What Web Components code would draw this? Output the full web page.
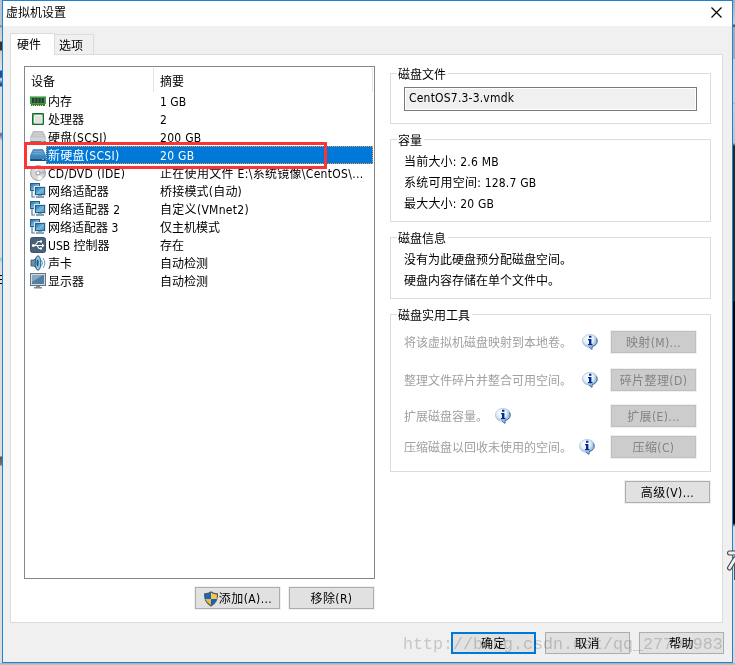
<!DOCTYPE html>
<html lang="zh-CN">
<head>
<meta charset="utf-8">
<title>虚拟机设置</title>
<style>
html,body{margin:0;height:100%;overflow:hidden}
body{font:12px/18px "DejaVu Sans Condensed","Noto Sans CJK SC",sans-serif;color:#000}
</style>
</head>
<body>
<desktop-backdrop>
<vm-dialog heading="虚拟机设置">
  <tab-panel>
    <tab-label slot="tabs" active>硬件</tab-label>
    <tab-label slot="tabs">选项</tab-label>
    <device-pane slot="left">
      <device-row icon="memory" name="内存">1 GB</device-row>
      <device-row icon="cpu" name="处理器">2</device-row>
      <device-row icon="disk" name="硬盘(SCSI)" style="--ls:.28px">200 GB</device-row>
      <device-row icon="diskblue" name="新硬盘(SCSI)" selected style="--ls:.28px">20 GB</device-row>
      <device-row icon="cd" name="CD/DVD (IDE)" style="--ls:.31px">正在使用文件 E:\系统镜像\CentOS\...</device-row>
      <device-row icon="net" name="网络适配器" style="--ls:.2px">桥接模式(自动)</device-row>
      <device-row icon="net" name="网络适配器 2" style="--ls:.3px">自定义(VMnet2)</device-row>
      <device-row icon="net" name="网络适配器 3">仅主机模式</device-row>
      <device-row icon="usb" name="USB 控制器">存在</device-row>
      <device-row icon="sound" name="声卡">自动检测</device-row>
      <device-row icon="screen" name="显示器">自动检测</device-row>
      <dialog-button slot="actions"><vm-icon name="shield"></vm-icon>添加(A)...</dialog-button>
      <dialog-button slot="actions">移除(R)</dialog-button>
    </device-pane>
    <detail-pane slot="right">
      <group-box heading="磁盘文件" style="height:51px;--pad:14px 13px 0"><path-field>CentOS7.3-3.vmdk</path-field></group-box>
      <group-box heading="容量" style="height:83px;--pad:12px 13px 0">
        <text-line>当前大小: 2.6 MB</text-line><text-line>系统可用空间: 128.7 GB</text-line><text-line>最大大小: 20 GB</text-line>
      </group-box>
      <group-box heading="磁盘信息" style="height:62px;--pad:12px 13px 0">
        <text-line style="letter-spacing:0">没有为此硬盘预分配磁盘空间。</text-line><text-line style="letter-spacing:0">硬盘内容存储在单个文件中。</text-line>
      </group-box>
      <group-box heading="磁盘实用工具" style="height:158px;--pad:16px 14px 0 13px">
        <tool-row action="映射(M)..." style="margin-bottom:15px;--gap:10px">将该虚拟机磁盘映射到本地卷。</tool-row>
        <tool-row action="碎片整理(D)" style="margin-bottom:13px;--gap:10px">整理文件碎片并整合可用空间。</tool-row>
        <tool-row action="扩展(E)..." style="margin-bottom:8px;--gap:7px">扩展磁盘容量。</tool-row>
        <tool-row action="压缩(C)" style="--gap:7px">压缩磁盘以回收未使用的空间。</tool-row>
      </group-box>
      <dialog-button style="align-self:flex-end;margin:-6px 1px 0 0">高级(V)...</dialog-button>
    </detail-pane>
  </tab-panel>
  <dialog-button slot="footer" primary>确定</dialog-button>
  <dialog-button slot="footer">取消</dialog-button>
  <dialog-button slot="footer">帮助</dialog-button>
</vm-dialog>
</desktop-backdrop>

<script>
const define = (name, css, html) => customElements.define(name, class extends HTMLElement {
  constructor() { super(); this.attachShadow({mode: 'open'}); }
  connectedCallback() {
    this.shadowRoot.innerHTML = `<style>*{box-sizing:border-box}:host{box-sizing:border-box}${css}</style>` + (typeof html === 'function' ? html(this) : html);
  }
});

const screenShape = (x, y, w, h) => `<rect x="${x}" y="${y}" width="${w}" height="${h}" fill="#2b5f8b"/><rect x="${x+1}" y="${y+1}" width="${w-2}" height="${h-2}" fill="url(#s)"/>`;
const drive = (top, mid, low, edge) => `<path d="M3.200 2.500h9.600l2.900 6v5h-15.400v-5z" fill="${top}" stroke="${edge}" stroke-width=".5"/><path d="M.3 8.500h15.400v5H.3z" fill="${mid}"/><path d="M.3 12h15.400v2H.3z" fill="${low}"/><path d="M4 4.500h8M3.400 6.500h9.200" stroke="#fff" stroke-opacity=".25" stroke-width=".7"/>`;
const ICONS = {
  memory: `<path d="M0 3h16v8h-1v2H1v-2H0z" fill="#3f9a45"/><path d="M0 3h16v1H0z" fill="#86c988"/><path d="M2 5h2.400v5H2zM5.200 5h2.400v5H5.200zM8.400 5h2.400v5H8.400zM11.600 5H14v5h-2.400z" fill="#343a3c"/><path d="M1 11.500h14V13H1z" fill="#267430"/><path d="M2 12.500h12" stroke="#e7d97b" stroke-dasharray="1 1"/>`,
  cpu: `<path d="M2.500 2.500h11v11h-11z" fill="#5fb565" stroke="#16683a"/><rect x="4.500" y="4.500" width="7.500" height="7.500" rx=".8" fill="#e0e1e1" stroke="#f8faf8"/><path d="M4.500 12.300h7.800V4.500" fill="none" stroke="#aab9af" stroke-width=".7"/>`,
  disk: drive('#c3c6ca', '#d2d5d8', '#73777b', '#94999d') + `<path d="M11 12.800h3" stroke="#7bf064"/>`,
  diskblue: drive('#4f95c8', '#3c82bb', '#135481', '#205e8e') + `<path d="M12 12.500h2" stroke="#45bfcf"/>`,
  cd: `<circle cx="8" cy="8" r="7.400" fill="#d5d7da" stroke="#999fa4"/><path d="M8 8L3 2.500A7 7 0 0 1 9 1zM8 8l5 5.500A7 7 0 0 1 7.500 15z" fill="#f8f8f8"/><path d="M8 8l6.500-2.500A7 7 0 0 1 15 9z" fill="#b4b7bb"/><circle cx="8" cy="8" r="2.600" fill="#aaafb3"/><circle cx="8" cy="8" r="1.300" fill="#fff"/>`,
  net: `<defs><linearGradient id="s" x2="1" y2="1"><stop stop-color="#2675ad"/><stop offset=".55" stop-color="#75b9dd"/><stop offset="1" stop-color="#4b91c0"/></linearGradient></defs>${screenShape(0, 0, 10, 8)}<path d="M2 8v6h3" fill="none" stroke="#477ca4" stroke-width="1.200"/><rect x="4" y="3" width="12" height="10" fill="#d9e7f0"/>${screenShape(5, 4, 10, 8)}<path d="M8 12h4v1h2v2H6v-2h2z" fill="#88a3b6"/>`,
  usb: `<rect x=".5" y=".5" width="15" height="15" rx="2" fill="#486179" stroke="#39536c"/><path d="M2.500 8.500h11M5 8.500l3-4h2M7 8.500l2 3h2" fill="none" stroke="#fff" stroke-width="1.100"/><circle cx="3.400" cy="8.500" r="1.500" fill="#fff"/><path d="M12 6.500l2.500 2-2.500 2zM10 3.500h2v2h-2zM10 10.500h2v2h-2z" fill="#fff"/>`,
  sound: `<path d="M1 5h3l4-4v14l-4-4H1z" fill="#6d91a9" stroke="#334d62" stroke-width=".8"/><ellipse cx="8" cy="8" rx="2.800" ry="7.200" fill="#95c8e5" stroke="#24618c"/><ellipse cx="7.600" cy="8" rx="1.100" ry="3.400" fill="#24577e"/><path d="M11.500 5q2 3 0 6M13 3q3.700 5 0 10" fill="none" stroke="#5a9aca"/>`,
  screen: `<rect x=".5" y=".5" width="15" height="12" fill="#d5dadd" stroke="#64757f"/><path d="M2 2h12v9H2z" fill="#547e9f"/><path d="M2 2h11L2 9z" fill="#88a7be"/><path d="M6 13h4v1h2v1.500H4V14h2z" fill="#7e8a93"/>`,
  shield: `<path d="M8 .3Q11 2.500 15 2.300Q16 11 8 15.800Q0 11 1 2.300Q5 2.500 8 .3z" fill="#555d61"/><path d="M8 1.800Q5 3.600 2.200 3.500V8H8z" fill="#1267bf"/><path d="M8 1.800q3 1.800 5.800 1.700V8H8z" fill="#ffc44a"/><path d="M2.300 8H8v6.300Q3.500 11.500 2.300 8z" fill="#f5b735"/><path d="M8 8h5.700Q12.500 11.500 8 14.300z" fill="#0964c4"/>`,
  info: `<defs><radialGradient id="b" cx=".4" cy=".3"><stop stop-color="#fff"/><stop offset=".65" stop-color="#e3f0fb"/><stop offset="1" stop-color="#a4c6e6"/></radialGradient></defs><path d="M8 .5c4.300 0 7.500 2.700 7.500 6.400 0 3.200-2.300 5.400-5.500 6.100v2.600L6.800 13.200C3 12.800.5 10.200.5 6.900.5 3.200 3.700.5 8 .5z" fill="url(#b)" stroke="#a6c0d9" stroke-width=".7"/><path d="M14.500 4.500Q17 10 10 12.700v2.600L7 13" fill="none" stroke="#466f9f"/><path d="M7 1.800h2.400v2H7zM6 5h3.400v5h1v1.200H6V10h1V6.200H6z" fill="#082b91"/>`
};

define('vm-icon', ':host{display:inline-block;width:16px;height:16px;flex:none}svg{display:block;width:100%;height:100%}',
  el => `<svg viewBox="0 0 16 16">${ICONS[el.getAttribute('name')]}</svg>`);

define('desktop-backdrop', `
:host{display:block;position:relative;width:735px;height:665px;overflow:hidden;padding:0 2px 2px;
 background:linear-gradient(#aaa,#c8c8c8) 0 663px/735px 2px no-repeat,
 linear-gradient(#a5adb8 0,#c6ced6 24px,#555b62 25px,#555b62 27px,#a3abba 27px,#a3abba 59px,#c7ced6 59px,#ccd2d8 102px,#a0a8b0 103px,#c7ced6 104px,#bcc2c8 143px,#252929 146px,#252929 301px,#000 302px,#000 523px,#ddd 527px,#d7d7d7) 733px 0/2px 663px no-repeat,
 linear-gradient(#bac5d0 0,#bac5d0 25px,#777 26px,#ccc 28px,#d5d5d5 41px,#333 42px,#333 50px,#ccc 51px,#e4e4e4 70px,#14529e 71px,#14529e 77px,#e4e4e4 79px,#14529e 84px,#14529e 86px,#d8dfe4 87px,#ddd 132px,#6261a5 134px,#ddd 141px,#ddd 257px,#8acbd1 259px,#ddd 263px,#ddd 275px,#000 275px,#000 276px,#ddd 276px,#ddd 279px,#000 279px,#000 280px,#ddd 280px,#ddd 283px,#000 283px,#000 284px,#ddd 284px,#ddd 456px,#555 457px,#777 465px,#ddd 466px) 0 0/2px 663px no-repeat}
svg{position:absolute;left:727px;top:548px;width:8px;height:34px}
.mark{position:absolute;left:403px;top:633px;font:16.670px/24px "Liberation Mono",monospace;color:#d4d4d0;white-space:pre;mix-blend-mode:multiply}`,
`<slot></slot><span class="mark">http://blog.csdn.net/qq_27794983</span>
<svg viewBox="0 0 8 34"><path d="M8 11L2.500 20" stroke="#444" stroke-width="5" stroke-linecap="round"/><path d="M2.500 5H8" stroke="#444" stroke-width="5" stroke-linecap="round"/><path d="M7 14v18h1V14z" fill="#555"/><path d="M8 11L2.500 20M2.500 5H8" stroke="#f0f0f0" stroke-width="2.800" stroke-linecap="round"/></svg>`);

define('vm-dialog', `
:host{display:flex;flex-direction:column;width:731px;height:663px;border:1px solid #1883d7;background:#f0f0f0}
header{display:flex;justify-content:space-between;height:25px;flex:none;background:#fff;padding:3px 10px 0 3px}
svg{width:11px;height:11px;margin-top:3px}
main{padding:7px 9px 0 7px;height:596px;flex:none}
footer{display:flex;justify-content:flex-end;gap:9px;padding:10px 8px 0}`,
el => `<header><span>${el.getAttribute('heading')}</span><svg viewBox="0 0 11 11"><path d="M.5.5l10 10M10.500.5l-10 10" stroke="#000" stroke-width="1.200"/></svg></header><main><slot></slot></main><footer><slot name="footer"></slot></footer>`);

define('tab-panel', `
:host{display:flex;flex-direction:column;height:590px}
nav{display:flex;align-items:flex-end;height:22px;margin-bottom:-1px;flex:none;position:relative}
section{flex:1;border:1px solid #dcdcdc;background:#fff;display:flex;gap:15px;padding:11px 11px 0 13px}`,
`<nav><slot name="tabs"></slot></nav><section><slot name="left"></slot><slot name="right"></slot></section>`);

define('tab-label', `
:host{display:block;width:39px;height:20px;margin-bottom:1px;border:1px solid #dcdcdc;border-width:1px 1px 0 0;padding:2px 0 0 4px}
:host([active]){width:45px;height:22px;margin-bottom:0;border-left-width:1px;background:#fff;padding:2px 0 0 6px}`, '<slot></slot>');

define('device-pane', `
:host{display:flex;flex-direction:column;width:351px;flex:none}
.list{position:relative;height:513px;border:1px solid #828790;padding:1px 1px 0 0}
.head{display:flex;height:24px;line-height:28px}
.head span{border-right:1px solid #e5e5e5;padding-left:6px;width:129px}
.head span+span{flex:1}
.frame{position:absolute;left:-1px;top:75px;width:303px;height:27px;border:3px solid #fb3435}
.actions{display:flex;justify-content:flex-end;gap:9px;padding:8px 1px 0 0}`,
`<div class="list"><div class="head"><span>设备</span><span>摘要</span></div><slot></slot><div class="frame"></div></div><div class="actions"><slot name="actions"></slot></div>`);

define('device-row', `
:host{display:flex;height:18px;padding-left:5px;white-space:pre;letter-spacing:var(--ls,0)}
vm-icon{margin-top:1px}
div{display:flex;flex:1;border:1px solid transparent;line-height:19px}
b{font-weight:400;width:113px;padding-left:1px}
:host([selected]) div{background:#0078d7;color:#fff;border:1px dotted #ed9c52}`,
el => `<vm-icon name="${el.getAttribute('icon')}"></vm-icon><div><b>${el.getAttribute('name')}</b><span><slot></slot></span></div>`);

define('dialog-button', `
:host{display:flex;align-items:center;justify-content:center;width:85px;height:22px;flex:none;border:1px solid #adadad;background:#e1e1e1;box-shadow:0 0 0 1px #f0f0f0;white-space:pre;letter-spacing:.4px;padding-top:2px}
:host([primary]){border:2px solid #0078d7}
:host([disabled]){background:#ccc;border-color:#bfbfbf;color:#838383}`, '<slot></slot>');

define('detail-pane', ':host{display:flex;flex-direction:column;gap:15px;padding-top:7px;flex:1;align-items:stretch}', '<slot></slot>');

define('group-box', `
:host{display:block;position:relative;border:1px solid #dcdcdc;padding:var(--pad)}
h3{position:absolute;left:6px;top:-8px;margin:0;padding:0 2px 0 1px;background:#fff;font:inherit;line-height:18px}`,
el => `<h3>${el.getAttribute('heading')}</h3><slot></slot>`);

define('path-field', ':host{display:block;height:24px;margin-top:-1px;border:1px solid #7a7a7a;background:#f0f0f0;box-shadow:inset 0 0 0 1px #fff;padding:1px 4px;letter-spacing:.2px}', '<slot></slot>');
define('text-line', ':host{display:block;height:21px;line-height:21px;white-space:pre;letter-spacing:.2px}', '<slot></slot>');
define('tool-row', `
:host{display:flex;height:23px;line-height:25px;color:#a0a0a0;white-space:pre}
vm-icon{margin:3px 0 0 var(--gap)}
dialog-button{margin-left:auto}`,
el => `<span><slot></slot></span><vm-icon name="info"></vm-icon><dialog-button disabled>${el.getAttribute('action')}</dialog-button>`);
</script>
</body>
</html>
